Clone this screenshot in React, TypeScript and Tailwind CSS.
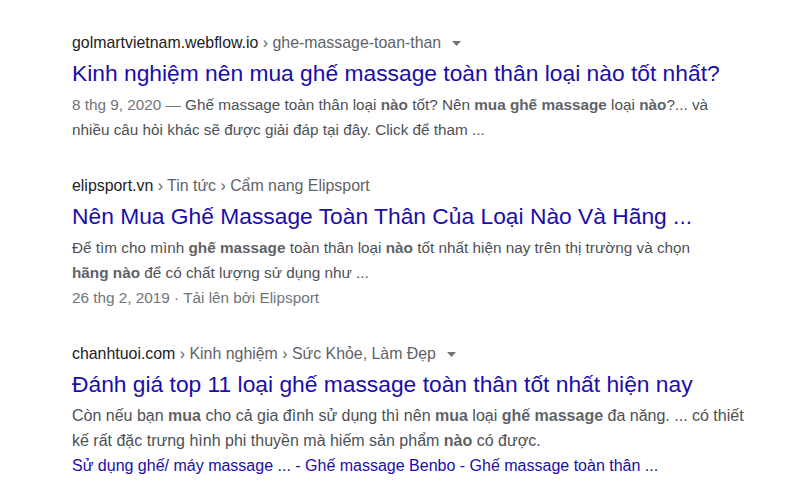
const font = { fontFamily: '"Liberation Sans", Arial, sans-serif' };

function Caret() {
  return (
    <svg width="9" height="5" viewBox="0 0 9 5" className="ml-[11px] mt-[1px] inline-block">
      <path d="M0 0h9L4.5 5z" fill="#70757a" />
    </svg>
  );
}

function Crumb({ site, path, caret }: { site: string; path: string; caret?: boolean }) {
  return (
    <div className="flex items-center h-[20px] text-[15.9px] whitespace-nowrap">
      <span className="text-[#202124]">{site}</span>
      <span className="text-[#5f6368]">&nbsp;› {path}</span>
      {caret && <Caret />}
    </div>
  );
}

function Title({ children }: { children: React.ReactNode }) {
  return (
    <div className="mt-[5px] text-[22.8px] leading-[30px] text-[#1a0dab] whitespace-nowrap">{children}</div>
  );
}

const B = ({ children }: { children: React.ReactNode }) => (
  <b className="font-bold text-[#5f6368]">{children}</b>
);

export default function App() {
  return (
    <div className="w-[800px] h-[497px] bg-white overflow-hidden pl-[72px] pt-[33px]" style={font}>
      <div className="flex flex-col">
        <Crumb site="golmartvietnam.webflow.io" path="ghe-massage-toan-than" caret />
        <Title>Kinh nghiệm nên mua ghế massage toàn thân loại nào tốt nhất?</Title>
        <div className="mt-[4px] text-[15.3px] leading-[25px] text-[#4d5156] whitespace-nowrap">
          <div>
            <span className="text-[#70757a]">8 thg 9, 2020 — </span>
            Ghế massage toàn thân loại <B>nào</B> tốt? Nên <B>mua ghế massage</B> loại <B>nào</B>?... và
          </div>
          <div>nhiều câu hỏi khác sẽ được giải đáp tại đây. Click để tham ...</div>
        </div>
      </div>

      <div className="flex flex-col mt-[34px]">
        <Crumb site="elipsport.vn" path="Tin tức › Cẩm nang Elipsport" />
        <Title>Nên Mua Ghế Massage Toàn Thân Của Loại Nào Và Hãng ...</Title>
        <div className="mt-[4px] text-[15.3px] leading-[25px] text-[#4d5156] whitespace-nowrap">
          <div>
            Để tìm cho mình <B>ghế massage</B> toàn thân loại <B>nào</B> tốt nhất hiện nay trên thị trường và chọn
          </div>
          <div>
            <B>hãng nào</B> để có chất lượng sử dụng như ...
          </div>
          <div className="text-[#70757a]">26 thg 2, 2019 · Tải lên bởi Elipsport</div>
        </div>
      </div>

      <div className="flex flex-col mt-[34px]">
        <Crumb site="chanhtuoi.com" path="Kinh nghiệm › Sức Khỏe, Làm Đẹp" caret />
        <Title>Đánh giá top 11 loại ghế massage toàn thân tốt nhất hiện nay</Title>
        <div className="mt-[4px] text-[16px] leading-[25px] text-[#4d5156] whitespace-nowrap">
          <div>
            Còn nếu bạn <B>mua</B> cho cả gia đình sử dụng thì nên <B>mua</B> loại <B>ghế massage</B> đa năng. ... có thiết
          </div>
          <div>
            kế rất đặc trưng hình phi thuyền mà hiếm sản phẩm <B>nào</B> có được.
          </div>
          <div className="text-[#1a0dab]">
            <span>Sử dụng ghế/ máy massage ...</span>
            <span> - </span>
            <span>Ghế massage Benbo</span>
            <span> - </span>
            <span>Ghế massage toàn thân ...</span>
          </div>
        </div>
      </div>
    </div>
  );
}
